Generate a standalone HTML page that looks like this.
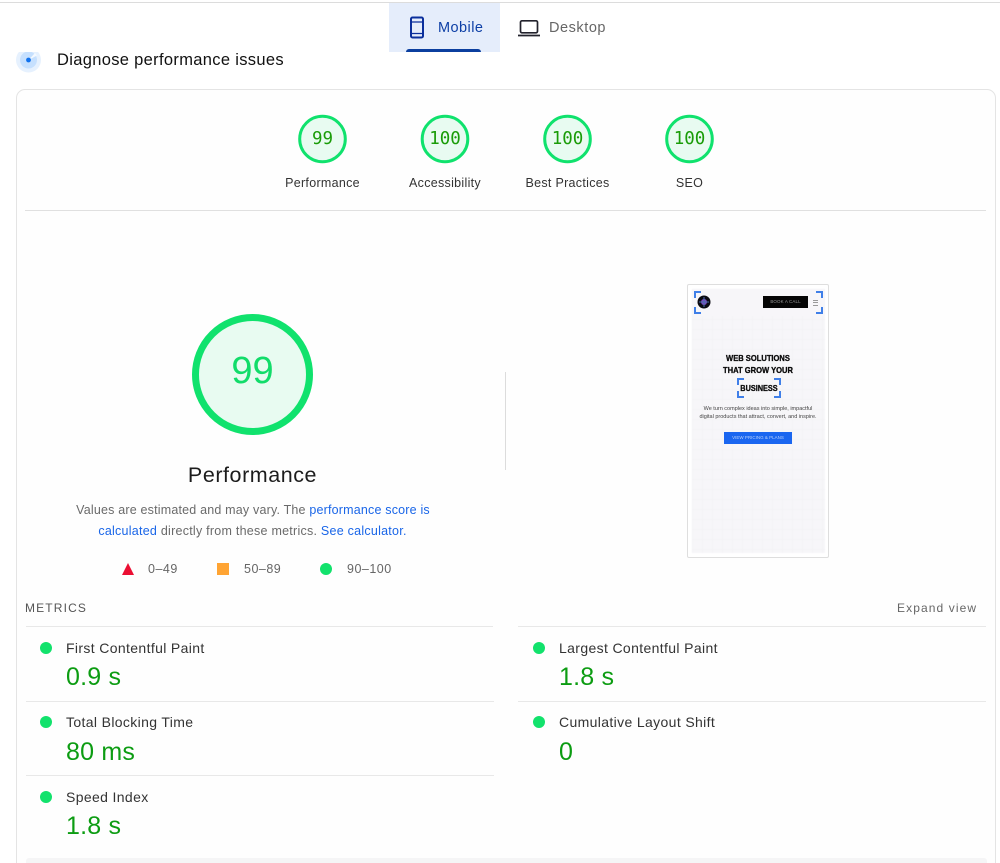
<!DOCTYPE html>
<html><head><meta charset="utf-8"><title>PageSpeed</title>
<style>
html,body{margin:0;padding:0;background:#fff;width:1000px;height:863px;overflow:hidden}
#w{width:1000px;height:863px;position:relative;overflow:hidden;font-family:"Liberation Sans",sans-serif;color:#202124;filter:blur(.25px)}
.a{position:absolute;white-space:nowrap}
.c{text-align:center;transform:translateX(-50%)}
.l{height:1px;background:#e8e8e8;position:absolute}
.d{position:absolute;width:12px;height:12px;border-radius:50%;background:#12e26c}
.m{font-size:14px;letter-spacing:.36px;color:#333}
.v{font-size:25px;color:#0c9c12;letter-spacing:.2px}
.g{font-family:"DejaVu Sans Mono",monospace;font-size:17.500px;color:#1a9c08}
.s{font-size:12.5px;color:#333;letter-spacing:.3px}
a{color:#1a66e8;text-decoration:none}
.b{position:absolute;width:5px;height:5px;border:0 solid #3f7fe8}
</style></head><body><div id="w">
<div class="a" style="left:0;top:2px;width:1000px;height:1px;background:#dcdcdc"></div>
<div class="a" style="left:389px;top:3px;width:111px;height:49px;background:#e5edfb"></div>
<div class="a" style="left:406px;top:49px;width:75px;height:3px;background:#0b3f9f;border-radius:3px 3px 0 0"></div>
<svg class="a" style="left:408px;top:15px" width="20" height="25" viewBox="0 0 20 25" fill="none" stroke="#0b2f9c" stroke-width="2"><rect x="3" y="2.500" width="12" height="20" rx="1.500"/><path d="M3 7h12M3 18.500h12" stroke-width="1.200"/></svg>
<div class="a" style="left:438px;top:20px;font-size:14.500px;letter-spacing:.45px;color:#0d3fa6">Mobile</div>
<svg class="a" style="left:517px;top:17px" width="26" height="21" viewBox="0 0 26 21" fill="none" stroke="#22222c" stroke-width="1.700"><rect x="3.500" y="3.800" width="17" height="12" rx="1.500"/><path d="M1 18.500h22" stroke-width="1.800"/></svg>
<div class="a" style="left:549px;top:20px;font-size:14.500px;letter-spacing:.55px;color:#666">Desktop</div>

<svg class="a" style="left:14px;top:50px" width="30" height="26" viewBox="0 0 30 26"><defs><clipPath id="k"><rect x="0" y="2" width="30" height="24"/></clipPath></defs><g clip-path="url(#k)"><circle cx="14.500" cy="10" r="12.500" fill="#e6f1fe"/><circle cx="14.500" cy="10" r="8.500" fill="#c6e0fe"/><path d="M14.500 10 L21 3 L23 5.500Z" fill="#f4f9ff"/><circle cx="14.500" cy="10" r="2.400" fill="#1172ee"/></g></svg>
<div class="a" style="left:57px;top:51px;font-size:16.500px;letter-spacing:.32px;color:#111">Diagnose performance issues</div>

<div class="a" style="left:16px;top:89px;width:978px;height:800px;border:1.500px solid #e4e4e4;border-radius:9px;background:#fefefe"></div>

<svg class="a" style="left:0;top:0" width="1000" height="500" fill="#e8fbf1" stroke="#10e26d">
<circle cx="322.500" cy="139" r="22.800" stroke-width="3"/>
<circle cx="445" cy="139" r="22.800" stroke-width="3"/>
<circle cx="567.500" cy="139" r="22.800" stroke-width="3"/>
<circle cx="689.500" cy="139" r="22.800" stroke-width="3"/>
<circle cx="252.500" cy="374.500" r="57" stroke-width="7"/>
</svg>
<div class="a c g" style="left:322.500px;top:129px">99</div>
<div class="a c g" style="left:445px;top:129px">100</div>
<div class="a c g" style="left:567.500px;top:129px">100</div>
<div class="a c g" style="left:689.500px;top:129px">100</div>
<div class="a c s" style="left:322.500px;top:176px">Performance</div>
<div class="a c s" style="left:445px;top:176px">Accessibility</div>
<div class="a c s" style="left:567.500px;top:176px">Best Practices</div>
<div class="a c s" style="left:689.500px;top:176px">SEO</div>
<div class="l" style="left:25px;top:210px;width:961px;background:#e0e0e0"></div>

<div class="a c" style="left:252.500px;top:350px;font-size:38px;color:#12dc6a;letter-spacing:0">99</div>
<div class="a c" style="left:252.500px;top:463px;font-size:21.500px;letter-spacing:.55px;color:#1c1c1c">Performance</div>
<div class="a c" style="left:253px;top:503px;font-size:12.500px;letter-spacing:.19px;color:#6a6a6a">Values are estimated and may vary. The <a>performance score is</a></div>
<div class="a c" style="left:252.500px;top:524px;font-size:12.500px;letter-spacing:.25px;color:#6a6a6a"><a>calculated</a> directly from these metrics. <a>See calculator.</a></div>
<svg class="a" style="left:120px;top:562px" width="16" height="14"><path d="M8 1 L14 13 H2Z" fill="#eb0f33"/></svg>
<div class="a" style="left:148px;top:562px;font-size:12.500px;letter-spacing:.5px;color:#666">0–49</div>
<div class="a" style="left:217px;top:563px;width:12px;height:12px;background:#ffa433"></div>
<div class="a" style="left:244px;top:562px;font-size:12.500px;letter-spacing:.5px;color:#666">50–89</div>
<div class="d" style="left:320px;top:563px"></div>
<div class="a" style="left:347px;top:562px;font-size:12.500px;letter-spacing:.5px;color:#666">90–100</div>

<div class="l" style="left:505px;top:372px;width:1px;height:98px;background:#dcdcdc"></div>

<!-- screenshot thumb -->
<div class="a" style="left:687px;top:284px;width:140px;height:272px;border:1px solid #dedede;border-radius:2px;background:#fff"></div>
<div class="a" style="left:692px;top:289px;width:133px;height:264px;filter:blur(.4px);background-color:#f7f6f9;background-image:linear-gradient(#f3f2f5 1px,transparent 1px),linear-gradient(90deg,#f3f2f5 1px,transparent 1px);background-size:10px 10px"></div>
<div class="a" style="left:692px;top:289px;width:133px;height:27px;background:#f7f6f9"></div>
<div style="position:absolute;left:0;top:0;width:1000px;height:863px;filter:blur(.35px)">
<div class="b" style="left:694px;top:291px;border-left-width:2px;border-top-width:2px"></div>
<div class="b" style="left:694px;top:307px;border-left-width:2px;border-bottom-width:2px"></div>
<div class="b" style="left:816px;top:291px;border-right-width:2px;border-top-width:2px"></div>
<div class="b" style="left:816px;top:307px;border-right-width:2px;border-bottom-width:2px"></div>
<svg class="a" style="left:697px;top:295px" width="14" height="14"><circle cx="7" cy="7" r="6.500" fill="#0a0a12"/><circle cx="7" cy="7" r="3" fill="#7a4bc0"/><path d="M7 2v10M2 7h10" stroke="#4a6fb0" stroke-width="1"/></svg>
<div class="a" style="left:763px;top:296px;width:45px;height:12px;background:#050505;color:#999;font-size:4.500px;line-height:12px;text-align:center;letter-spacing:.1px">BOOK A CALL</div>
<div class="a" style="left:813px;top:300px;width:5px;height:4px;border-top:1px solid #999;border-bottom:1px solid #999"></div>
<div class="a" style="left:813px;top:302px;width:5px;height:1px;background:#999"></div>
<div class="a" style="left:758px;top:351.500px;font-size:8.500px;line-height:12px;font-weight:bold;color:#0a0a0a;text-align:center;transform:translateX(-50%) scaleX(.89);-webkit-text-stroke:.3px #0a0a0a">WEB SOLUTIONS<br>THAT GROW YOUR</div>
<div class="a" style="left:758.500px;top:383px;font-size:8.500px;font-weight:bold;color:#0a0a0a;text-align:center;transform:translateX(-50%) scaleX(.86);-webkit-text-stroke:.3px #0a0a0a">BUSINESS</div>
<div class="b" style="left:737px;top:378px;border-left-width:2px;border-top-width:2px"></div>
<div class="b" style="left:737px;top:391px;border-left-width:2px;border-bottom-width:2px"></div>
<div class="b" style="left:774px;top:378px;border-right-width:2px;border-top-width:2px"></div>
<div class="b" style="left:774px;top:391px;border-right-width:2px;border-bottom-width:2px"></div>
<div class="a c" style="left:758px;top:405px;font-size:5.500px;line-height:8px;color:#444">We turn complex ideas into simple, impactful<br>digital products that attract, convert, and inspire.</div>
<div class="a" style="left:724px;top:432px;width:68px;height:12px;background:#1a66f0;color:#b8d0fa;font-size:4.500px;line-height:12px;text-align:center">VIEW PRICING &amp; PLANS</div>
</div>

<!-- metrics -->
<div class="a" style="left:25px;top:601px;font-size:12px;letter-spacing:1.150px;color:#555">METRICS</div>
<div class="a" style="left:897px;top:601px;font-size:12px;letter-spacing:1.100px;color:#666">Expand view</div>
<div class="l" style="left:26px;top:626px;width:467px"></div>
<div class="l" style="left:518px;top:626px;width:468px"></div>
<div class="l" style="left:26px;top:701px;width:468px"></div>
<div class="l" style="left:518px;top:701px;width:468px"></div>
<div class="l" style="left:26px;top:775px;width:468px"></div>

<div class="d" style="left:40px;top:642px"></div>
<div class="a m" style="left:66px;top:640px">First Contentful Paint</div>
<div class="a v" style="left:66px;top:663px">0.9 s</div>
<div class="d" style="left:40px;top:716px"></div>
<div class="a m" style="left:66px;top:714px">Total Blocking Time</div>
<div class="a v" style="left:66px;top:738px">80 ms</div>
<div class="d" style="left:40px;top:791px"></div>
<div class="a m" style="left:66px;top:789px">Speed Index</div>
<div class="a v" style="left:66px;top:812px">1.8 s</div>

<div class="d" style="left:533px;top:642px"></div>
<div class="a m" style="left:559px;top:640px">Largest Contentful Paint</div>
<div class="a v" style="left:559px;top:663px">1.8 s</div>
<div class="d" style="left:533px;top:716px"></div>
<div class="a m" style="left:559px;top:714px">Cumulative Layout Shift</div>
<div class="a v" style="left:559px;top:738px">0</div>

<div class="a" style="left:26px;top:858px;width:961px;height:5px;background:#f5f5f6;border-radius:3px 3px 0 0"></div>
</div></body></html>
